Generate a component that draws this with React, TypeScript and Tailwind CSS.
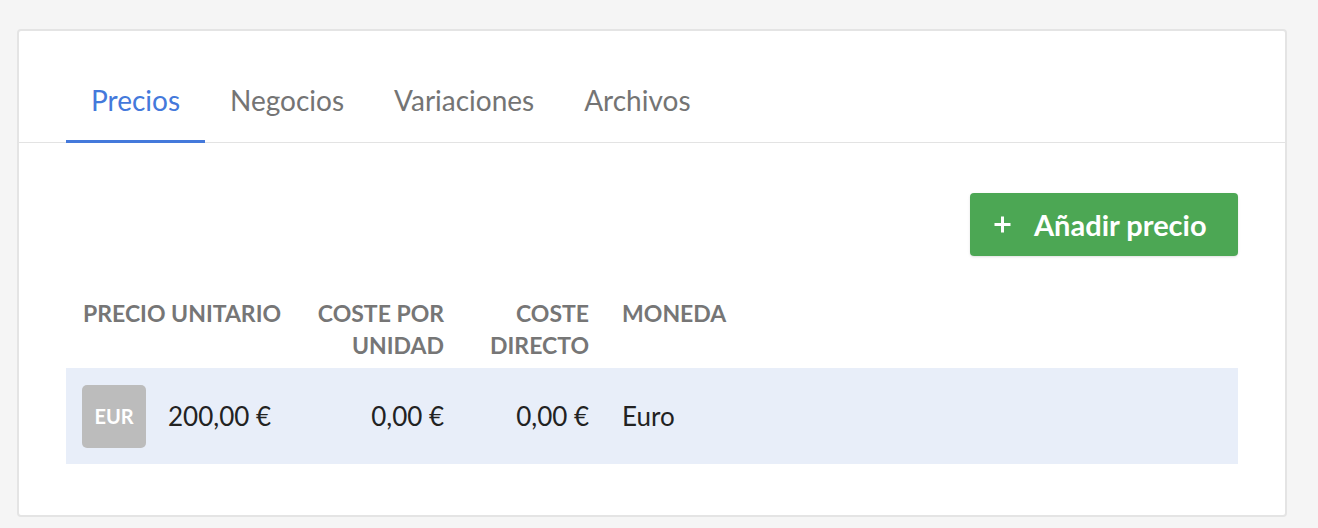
import { useState } from "react";

const tabs = ["Precios", "Negocios", "Variaciones", "Archivos"];

const prices = [
  { code: "EUR", unit: "200,00 €", perUnit: "0,00 €", direct: "0,00 €", currency: "Euro" },
];

const PlusIcon = () => (
  <svg width="19" height="19" viewBox="0 0 19 19" className="shrink-0">
    <path d="M9.5 1.5v16M1.5 9.5h16" stroke="white" strokeWidth="3" strokeLinecap="butt" />
  </svg>
);

const App = () => {
  const [active, setActive] = useState("Precios");

  return (
    <div
      className="min-h-[528px] w-full bg-[#f5f5f5] pt-[29px] pl-[17px] pr-[31px]"
      style={{ fontFamily: "Lato, 'Noto Sans', sans-serif" }}
    >
      <div className="rounded-[4px] border-2 border-[#e4e4e4] bg-white">
        <div className="flex border-b border-[#e3e3e3] px-[47px] pt-[50px]">
          {tabs.map((tab) => (
            <button
              key={tab}
              onClick={() => setActive(tab)}
              className={`px-[25px] pb-[21px] text-[28px] leading-[38px] border-b-[3px] -mb-px ${
                active === tab
                  ? "text-[#4479db] border-[#4479db]"
                  : "text-[#747474] border-transparent"
              }`}
            >
              {tab}
            </button>
          ))}
        </div>

        <div className="px-[47px] pt-[50px] pb-[51px]">
          <div className="flex justify-end">
            <button className="flex h-[63px] w-[268px] items-center gap-[22px] rounded-[4px] bg-[#4ca754] pl-[23px] text-[29px] font-bold text-white shadow-sm">
              <PlusIcon />
              <span>Añadir precio</span>
            </button>
          </div>

          <table className="mt-[41px] w-full border-collapse">
            <thead>
              <tr className="text-[23px] font-bold uppercase leading-[32px] text-[#767676]">
                <th className="w-[231px] whitespace-nowrap px-[17px] pb-[7px] text-left align-top font-bold">
                  Precio unitario
                </th>
                <th className="w-[163px] px-[17px] pb-[7px] text-right align-top font-bold">
                  Coste por
                  <br />
                  unidad
                </th>
                <th className="w-[145px] px-[17px] pb-[7px] text-right align-top font-bold">
                  Coste
                  <br />
                  directo
                </th>
                <th className="px-[16px] pb-[7px] text-left align-top font-bold">Moneda</th>
              </tr>
            </thead>
            <tbody>
              {prices.map((p) => (
                <tr key={p.code} className="h-[96px] bg-[#e8eef9] text-[26px] text-[#222]">
                  <td className="px-[16px]">
                    <div className="flex items-center gap-[22px]">
                      <span className="flex h-[63px] w-[64px] items-center justify-center rounded-[5px] bg-[#bcbcbc] text-[20px] font-bold text-white">
                        {p.code}
                      </span>
                      <span>{p.unit}</span>
                    </div>
                  </td>
                  <td className="px-[17px] text-right">{p.perUnit}</td>
                  <td className="px-[17px] text-right">{p.direct}</td>
                  <td className="px-[16px] text-left">{p.currency}</td>
                </tr>
              ))}
            </tbody>
          </table>
        </div>
      </div>
    </div>
  );
};

export default App;
